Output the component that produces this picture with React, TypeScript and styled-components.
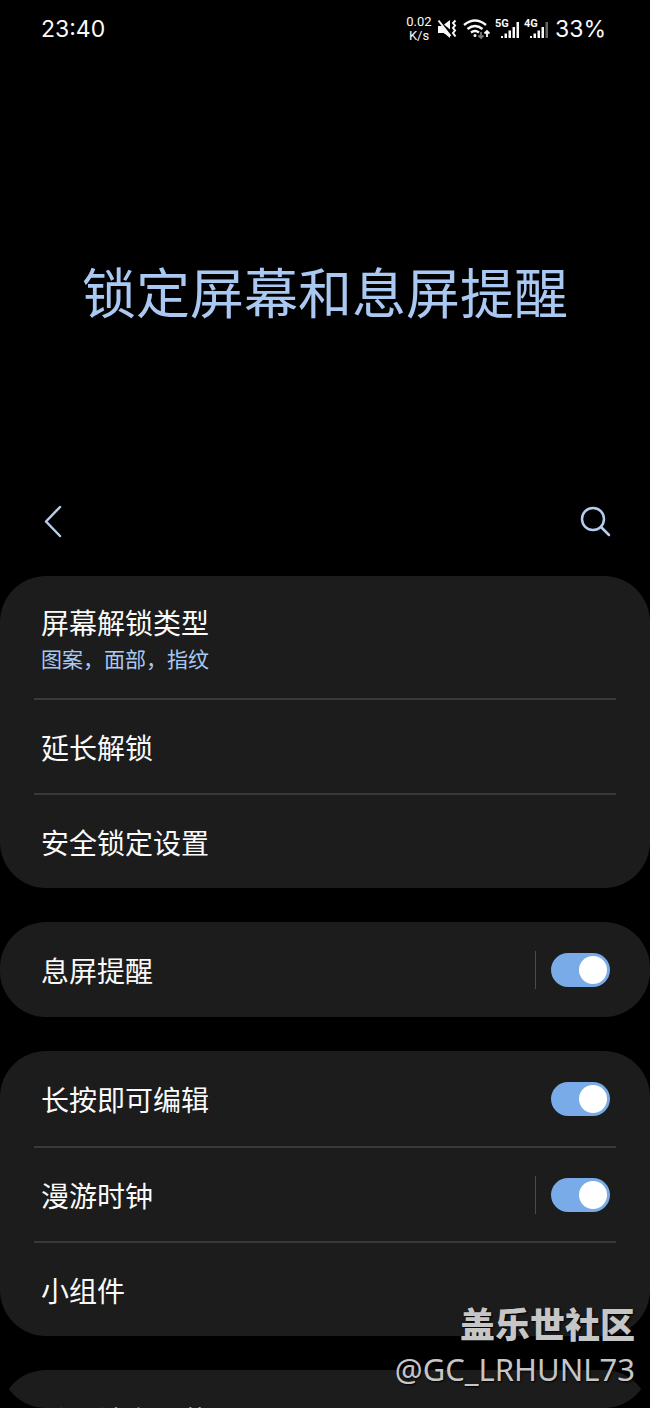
import React from 'react';
import styled, { createGlobalStyle } from 'styled-components';

const GlobalStyle = createGlobalStyle`
  * { box-sizing: border-box; }
  html, body { margin: 0; background: #000; }
  body { color: #fafafa; font-family: Inter, "Noto Sans CJK SC", sans-serif; }
`;

const Screen = styled.div`
  position: relative;
  display: flex;
  flex-direction: column;
  height: 100vh;
  overflow: hidden;
`;

const StatusBar = styled.header`
  flex: none;
  display: flex;
  justify-content: space-between;
  align-items: center;
  height: 58px;
  padding: 0 44px 0 41px;
  font-size: 23px;
  line-height: 32px;
`;

const StatusGroup = styled.div`
  display: flex;
  align-items: center;
  gap: 5px;
`;

const Speed = styled.div`
  width: 26px;
  font-family: Roboto, sans-serif;
  font-size: 13px;
  line-height: 14px;
  text-align: center;
`;

const Percent = styled.span`
  margin-left: 2px;
`;

const Hero = styled.div`
  flex: none;
  display: flex;
  align-items: center;
  justify-content: center;
  height: 432px;
  padding-top: 42px;
`;

const Title = styled.h1`
  margin: 0;
  color: #a9c9f3;
  font-size: 54px;
  font-weight: 400;
  line-height: 80px;
`;

const Toolbar = styled.nav`
  flex: none;
  display: flex;
  justify-content: space-between;
  padding: 12px 35px 34px;
`;

const IconButton = styled.button`
  display: flex;
  align-items: center;
  justify-content: center;
  width: 40px;
  height: 40px;
  padding: 0;
  border: 0;
  background: none;
  color: #b6cdf0;
`;

const List = styled.main`
  flex: 1;
  min-height: 0;
  display: flex;
  flex-direction: column;
  gap: 34px;
  overflow: hidden;
  border-radius: 0 0 46px 46px;
`;

const Card = styled.section<{ $spacious?: boolean }>`
  flex: none;
  padding: ${({ $spacious }) => ($spacious ? 2 : 0)}px 34px;
  border-radius: 46px;
  background: #1c1c1c;
`;

const Row = styled.div<{ $tall?: boolean }>`
  display: flex;
  align-items: center;
  justify-content: space-between;
  height: ${({ $tall }) => ($tall ? 122 : 95)}px;
  padding: 0 6px 0 7px;
  & + & { border-top: 2px solid #393939; }
`;

const Label = styled.label`
  padding-top: 5px;
  font-size: 28px;
  line-height: 40px;
`;

const Summary = styled.div`
  color: #a9c9f3;
  font-size: 21px;
  line-height: 32px;
`;

const Control = styled.div`
  display: flex;
  align-items: center;
  gap: 15px;
`;

const Separator = styled.span`
  width: 1px;
  height: 38px;
  background: #4a4a4a;
`;

const Switch = styled.input`
  display: flex;
  align-items: center;
  justify-content: flex-start;
  appearance: none;
  width: 59px;
  height: 34px;
  margin: 0;
  padding: 3px;
  border-radius: 17px;
  background: #555;
  &:checked {
    justify-content: flex-end;
    background: #78abe7;
  }
  &::before {
    content: "";
    width: 28px;
    height: 28px;
    border-radius: 50%;
    background: #fff;
  }
`;

const Watermark = styled.div`
  position: absolute;
  right: 15px;
  bottom: 17px;
  color: #c6c6c6;
  font-family: "Noto Sans", "Noto Sans CJK SC", sans-serif;
  font-size: 31px;
  line-height: 44px;
  text-align: right;
  text-shadow: 1px 1px 2px #000;
`;

const Community = styled.div`
  font-size: 35px;
  font-weight: 900;
  line-height: 44px;
`;

const MuteIcon = () => (
  <svg width="20" height="20" viewBox="0 0 20 20" fill="none" stroke="currentColor" aria-hidden="true">
    <path d="M7 5.500 13 1v9.500zM1 7h4l8 9.500V19l-6-5H1z" fill="currentColor" stroke="none" />
    <path d="M1 7h4l6 8H8l-1-1H1z" fill="currentColor" stroke="none" />
    <path d="M1.500 1.500 13.500 17" strokeWidth="2" />
    <path d="M18.500 1.500 16 4l2 2.500L16 9l2 2.500-2 2.500 2.500 3.500" strokeWidth="2" />
  </svg>
);

const WifiIcon = () => (
  <svg width="28" height="22" viewBox="0 0 28 22" fill="none" stroke="currentColor" aria-hidden="true">
    <path d="M2 7q11-9 22 0M5.500 11q7.500-6 15 0M9 14.500q4-3 8 0" strokeWidth="2.300" />
    <circle cx="13" cy="17.500" r="1.500" fill="currentColor" stroke="none" />
    <path d="M19 14v6m-2.500-2.500L19 20l2.500-2.500" stroke="#777" strokeWidth="1.800" />
    <path d="M25 19v-6m-2.500 2.500L25 13l2.500 2.500" strokeWidth="1.800" />
  </svg>
);

const Network = styled.div`
  display: grid;
  width: 24px;
  height: 20px;
  & > * { grid-area: 1 / 1; }
`;

const NetworkName = styled.span`
  font-family: Roboto, sans-serif;
  font-size: 11px;
  font-weight: 700;
  line-height: 10px;
`;

const Signal = ({ name, weak }: { name: string; weak?: boolean }) => (
  <Network>
    <NetworkName>{name}</NetworkName>
    <svg width="24" height="20" viewBox="0 0 24 20" fill="currentColor" aria-hidden="true">
      <path d="M6 17h2v2H6zM9.500 14.500H12V19H9.500zM13.500 11.500H16V19h-2.500zM17.500 8H20v11h-2.500z" />
      <path d="M21.500 3H24v16h-2.500z" fill={weak ? '#666' : 'currentColor'} />
    </svg>
  </Network>
);

const SwitchRow = ({ id, label, separated }: { id: string; label: string; separated?: boolean }) => (
  <Row>
    <Label htmlFor={id}>{label}</Label>
    <Control>
      {separated && <Separator />}
      <Switch id={id} type="checkbox" role="switch" defaultChecked />
    </Control>
  </Row>
);

const TextRow = ({ label, summary }: { label: string; summary?: string }) => (
  <Row $tall={!!summary}>
    <div>
      <Label as="div">{label}</Label>
      {summary && <Summary>{summary}</Summary>}
    </div>
  </Row>
);

export default function App() {
  return (
    <Screen>
      <GlobalStyle />
      <StatusBar>
        <time>23:40</time>
        <StatusGroup>
          <Speed>0.02<br />K/s</Speed>
          <MuteIcon />
          <WifiIcon />
          <Signal name="5G" />
          <Signal name="4G" weak />
          <Percent>33%</Percent>
        </StatusGroup>
      </StatusBar>
      <Hero><Title>锁定屏幕和息屏提醒</Title></Hero>
      <Toolbar>
        <IconButton aria-label="返回">
          <svg width="40" height="40" viewBox="0 0 40 40" fill="none" stroke="currentColor" strokeWidth="2.500" strokeLinecap="round" strokeLinejoin="round">
            <path d="M25 5 11 19.500 25 34" />
          </svg>
        </IconButton>
        <IconButton aria-label="搜索">
          <svg width="40" height="40" viewBox="0 0 40 40" fill="none" stroke="currentColor" strokeWidth="2.500" strokeLinecap="round">
            <circle cx="18" cy="17" r="11" />
            <path d="m26 25 8 8" />
          </svg>
        </IconButton>
      </Toolbar>
      <List>
        <Card>
          <TextRow label="屏幕解锁类型" summary="图案，面部，指纹" />
          <TextRow label="延长解锁" />
          <TextRow label="安全锁定设置" />
        </Card>
        <Card>
          <SwitchRow id="aod" label="息屏提醒" separated />
        </Card>
        <Card>
          <SwitchRow id="edit" label="长按即可编辑" />
          <SwitchRow id="clock" label="漫游时钟" separated />
          <TextRow label="小组件" />
        </Card>
        <Card $spacious>
          <TextRow label="关于锁定屏幕" />
        </Card>
      </List>
      <Watermark>
        <Community>盖乐世社区</Community>
        @GC_LRHUNL73
      </Watermark>
    </Screen>
  );
}
